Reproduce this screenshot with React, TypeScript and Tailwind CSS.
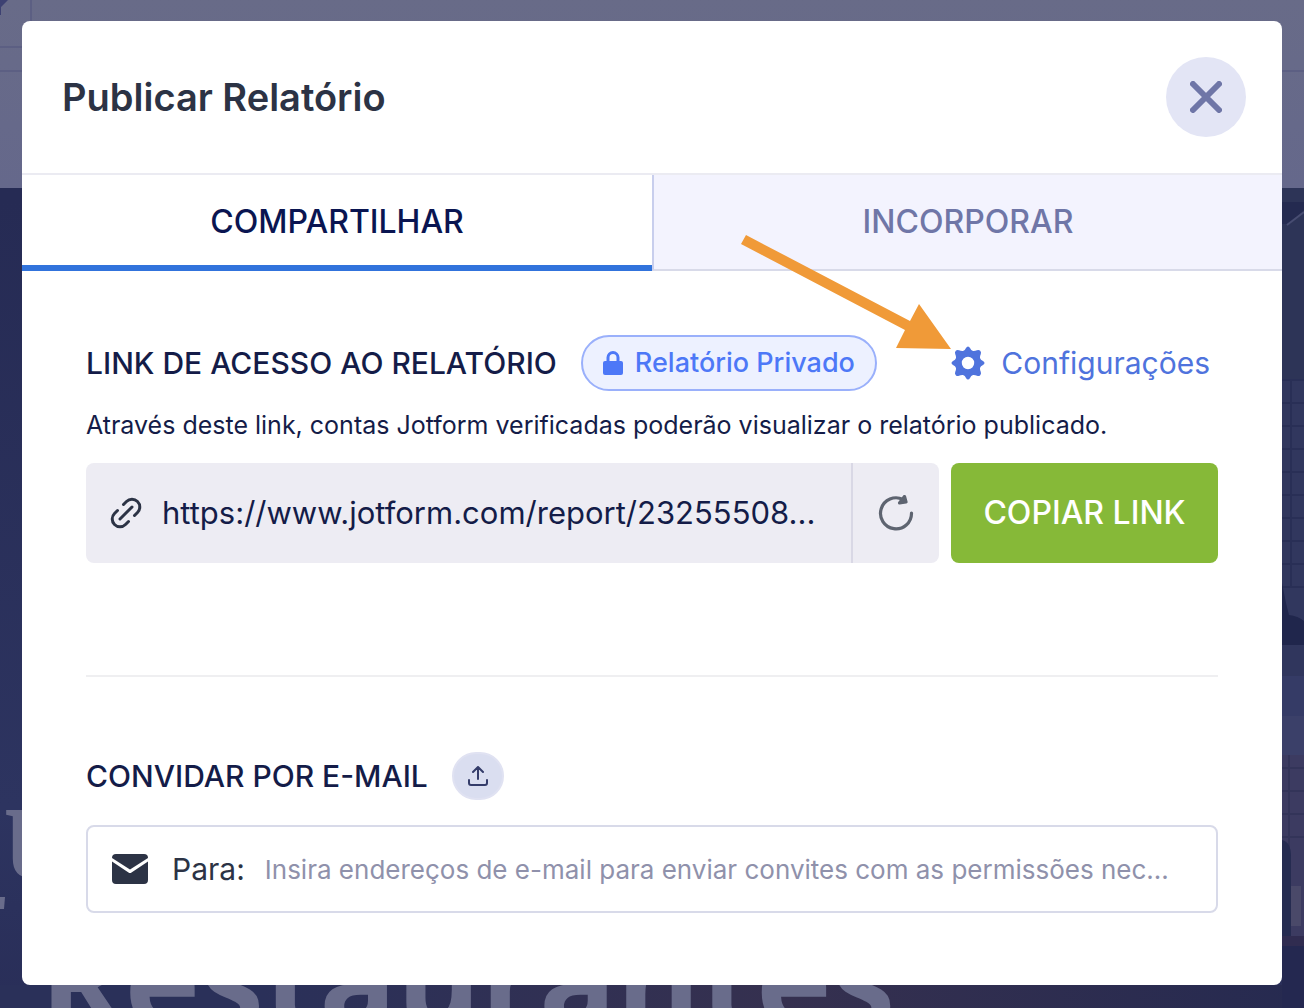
import type { ReactNode } from "react";

type Tab = { label: string; active: boolean };

const TABS: Tab[] = [
  { label: "COMPARTILHAR", active: true },
  { label: "INCORPORAR", active: false },
];

function LockIcon() {
  return (
    <svg width="20" height="24" viewBox="0 0 20 24" aria-hidden="true">
      <path d="M5 11V6.500a5 5 0 0 1 10 0V11" fill="none" stroke="#4d78f7" strokeWidth="3" />
      <rect x="0" y="10" width="20" height="14" rx="2" fill="#4d78f7" />
    </svg>
  );
}

function GearIcon() {
  return (
    <svg width="34" height="34" viewBox="0 0 34 34" aria-hidden="true" className="shrink-0">
      <path
        fill="#4f73dd"
        fillRule="evenodd"
        d="M17 .5Q18.200 .5 19 2Q20 4.500 22 5Q24 5.200 26 4.200Q28 3.500 29.200 4.800Q30.500 6 29.800 8Q28.800 10 29 12Q29.500 14 32 15Q33.500 15.800 33.500 17Q33.500 18.200 32 19Q29.500 20 29 22Q28.800 24 29.800 26Q30.500 28 29.200 29.200Q28 30.500 26 29.800Q24 28.800 22 29Q20 29.500 19 32Q18.200 33.500 17 33.500Q15.800 33.500 15 32Q14 29.500 12 29Q10 28.800 8 29.800Q6 30.500 4.800 29.200Q3.500 28 4.200 26Q5.200 24 5 22Q4.500 20 2 19Q.5 18.200 .5 17Q.5 15.800 2 15Q4.500 14 5 12Q5.200 10 4.200 8Q3.500 6 4.800 4.800Q6 3.500 8 4.200Q10 5.200 12 5Q14 4.500 15 2Q15.800 .5 17 .5ZM17 10.800a6.200 6.200 0 1 0 0 12.400a6.200 6.200 0 1 0 0-12.400Z"
      />
    </svg>
  );
}

function LinkIcon() {
  return (
    <svg width="32" height="32" viewBox="0 0 32 32" fill="none" stroke="#2c3345" strokeWidth="3" strokeLinecap="round" aria-hidden="true" className="shrink-0">
      <path d="M13.500 7.500l3-3a7.600 7.600 0 0 1 11 11l-3 3M7.500 13.500l-3 3a7.600 7.600 0 0 0 11 11l3-3M10 22l12-12" />
    </svg>
  );
}

function RefreshIcon() {
  return (
    <svg width="36" height="36" viewBox="0 0 36 36" fill="none" stroke="#5e6470" strokeWidth="3.200" strokeLinecap="round" strokeLinejoin="round" aria-hidden="true">
      <path d="M33.500 18A15.500 15.500 0 1 1 25 4.500" />
      <path d="M26.500 1.500L28 7L21.500 8Z" fill="#5e6470" />
    </svg>
  );
}

function UploadIcon() {
  return (
    <svg width="20" height="20" viewBox="0 0 20 20" fill="none" stroke="#343c6a" strokeWidth="2" strokeLinecap="round" strokeLinejoin="round" aria-hidden="true">
      <path d="M1 14v3a2 2 0 0 0 2 2h14a2 2 0 0 0 2-2v-3M10 13V1M5 6l5-5 5 5" />
    </svg>
  );
}

function MailIcon() {
  return (
    <svg width="36" height="30" viewBox="0 0 36 30" fill="#2c3345" aria-hidden="true" className="shrink-0">
      <path d="M0 4a4 4 0 0 1 4-4h28a4 4 0 0 1 4 4L18 15.500Z" />
      <path d="M0 7.500L16.500 18.500Q18 19.500 19.500 18.500L36 7.500V26a4 4 0 0 1-4 4h-28a4 4 0 0 1-4-4Z" />
    </svg>
  );
}

function Heading({ children }: { children: ReactNode }) {
  return <h2 className="whitespace-nowrap text-[30px] leading-10 font-medium text-[#141c48]">{children}</h2>;
}

// Dimmed page that stays visible around the dialog
function Backdrop() {
  return (
    <div aria-hidden="true" className="absolute inset-0 overflow-hidden bg-linear-to-b from-[#262b54] from-20% via-[#2d3460] via-80% to-[#292e58]">
      <div className="h-[188px] bg-linear-to-b from-[#686b88] to-[#65688b]">
        <svg width="100%" height="188">
          <path d="M0 0h8L1 7v8H0Z" fill="#3d4172" />
          <path d="M31 0v47M0 47h31M0 71h2000" stroke="#5c5f83" strokeWidth="2" fill="none" />
        </svg>
      </div>
      <div className="absolute inset-x-0 bottom-0 h-[23px] bg-linear-to-r from-[#2a3059] from-20% via-[#35304f] via-60% to-[#262a50]" />
      <svg className="absolute right-0 top-[188px]" width="22" height="820">
        <rect width="22" height="192" fill="#2d3457" />
        <path d="M0 14h22v8L8 36H0Z" fill="#242a50" />
        <path d="M5 37L22 24" stroke="#484d72" strokeWidth="2" />
        <rect y="191" width="22" height="270" fill="#31375e" />
        <path d="M0 192h22M0 215h22M0 238h22M0 261h22M0 284h22M0 307h22M0 330h22M0 353h22M0 376h22M0 399h22M9 192v208" stroke="#292f56" strokeWidth="2" />
        <path d="M0 395l4 20 3 12q9 1 15 6v24H0Z" fill="#20264c" />
        <rect y="457" width="22" height="31" fill="#30365d" />
        <rect y="488" width="22" height="40" fill="#353b66" />
        <rect y="528" width="22" height="39" fill="#3b4069" />
        <rect y="567" width="22" height="183" fill="#3c3b61" />
        <path d="M0 580h22M0 603h22M0 626h22M0 649h22M7 567v100" stroke="#333459" strokeWidth="2" />
        <path d="M0 652q9 2 9 16v82H0Z" fill="#252b50" />
        <rect x="9" y="698" width="10" height="40" fill="#4a4969" />
        <rect y="748" width="22" height="10" fill="#302c50" />
        <rect y="758" width="22" height="62" fill="#242850" />
      </svg>
      <svg className="absolute left-0 top-[897px]" width="6" height="12">
        <path d="M0 0h5l-1 12H0Z" fill="#696c8b" />
      </svg>
      <div className="absolute left-1 top-[756px] font-['Liberation_Serif',serif] text-[144px] leading-none font-bold text-[#696c8b]">u</div>
      <div className="absolute left-10 top-[914px] font-['Open_Sans',sans-serif] text-[128px] leading-none font-bold text-[#696c8b]">Restaurantes</div>
    </div>
  );
}

export default function App() {
  return (
    <div className="relative min-h-screen px-[22px] pt-[21px] pb-[23px] font-['Inter',sans-serif]">
      <Backdrop />
      <main role="dialog" aria-labelledby="dialog-title" className="relative rounded-lg bg-white pb-[72px]">
        <header className="flex items-center justify-between border-b-2 border-[#ebebf2] py-9 pr-9 pl-10">
          <h1 id="dialog-title" className="text-[38px] leading-[48px] font-semibold text-[#2c3345]">Publicar Relatório</h1>
          <button aria-label="Fechar" className="grid size-20 place-items-center rounded-full bg-[#e3e5f5]">
            <svg width="32" height="32" viewBox="0 0 32 32" stroke="#6f76a7" strokeWidth="6" strokeLinecap="round" aria-hidden="true">
              <path d="M3 3l26 26M29 3L3 29" />
            </svg>
          </button>
        </header>

        <div role="tablist" className="grid grid-cols-2">
          {TABS.map(t => (
            <button
              key={t.label}
              role="tab"
              aria-selected={t.active}
              className={`h-24 text-[32px] leading-10 font-medium ${
                t.active
                  ? "border-b-6 border-[#3173dc] bg-white pt-1 text-[#0a1551]"
                  : "border-b-2 border-l-2 border-[#d8dae9] border-l-[#c8ceed] bg-[#f3f3fe] text-[#6f76a7]"
              }`}
            >
              {t.label}
            </button>
          ))}
        </div>

        <div className="px-16 pt-16">
          <section>
            <div className="flex items-center">
              <Heading>LINK DE ACESSO AO RELATÓRIO</Heading>
              <span className="ml-6 flex h-14 items-center gap-3 rounded-full border-2 border-[#9ab0fb] bg-[#edf1ff] px-5 text-[27px] font-medium whitespace-nowrap text-[#4d78f7]">
                <LockIcon />
                Relatório Privado
              </span>
              <button className="mr-2 ml-auto flex items-center gap-4 text-[30px] leading-10 text-[#4f73dd]">
                <GearIcon />
                Configurações
              </button>
            </div>
            <p className="mt-4 text-[25px] leading-9 whitespace-nowrap text-[#141c48]">
              Através deste link, contas Jotform verificadas poderão visualizar o relatório publicado.
            </p>
            <div className="mt-5 flex h-[100px] gap-3">
              <div className="flex min-w-0 flex-1 overflow-hidden rounded-lg bg-[#edecf3]">
                <label className="flex min-w-0 flex-1 items-center gap-5 pr-4 pl-6">
                  <LinkIcon />
                  <input
                    aria-label="Link do relatório"
                    readOnly
                    value="https://www.jotform.com/report/23255508..."
                    className="min-w-0 flex-1 bg-transparent text-[31px] text-ellipsis text-[#141c48] outline-none"
                  />
                </label>
                <button aria-label="Atualizar link" className="grid w-22 place-items-center border-l-2 border-[#d9d8e5]">
                  <RefreshIcon />
                </button>
              </div>
              <button className="w-[267px] rounded-lg bg-[#86b938] text-[32px] font-medium text-white">COPIAR LINK</button>
            </div>
          </section>

          <hr className="mt-28 border-t-2 border-[#efeff1]" />

          <section className="pt-[75px]">
            <div className="flex items-center gap-6">
              <Heading>CONVIDAR POR E-MAIL</Heading>
              <button aria-label="Enviar lista" className="grid h-12 w-[52px] place-items-center rounded-full border-2 border-[#e0e2f2] bg-[#dadef0]">
                <UploadIcon />
              </button>
            </div>
            <label className="mt-[25px] flex h-22 items-center rounded-lg border-2 border-[#d8dae9] px-6">
              <MailIcon />
              <span className="ml-6 text-[30px] text-[#2c3345]">Para:</span>
              <input
                type="text"
                placeholder="Insira endereços de e-mail para enviar convites com as permissões nec..."
                className="ml-5 min-w-0 flex-1 text-[26px] text-ellipsis outline-none placeholder:text-[#8f91ab]"
              />
            </label>
          </section>
        </div>

        <svg className="pointer-events-none absolute top-[213px] left-[718px]" width="212" height="116" viewBox="0 0 212 116" fill="#f09a38" aria-hidden="true">
          <path d="M6 1L170 87L179 70L211 115L156 114L165 96L1 10Z" />
        </svg>
      </main>
    </div>
  );
}
